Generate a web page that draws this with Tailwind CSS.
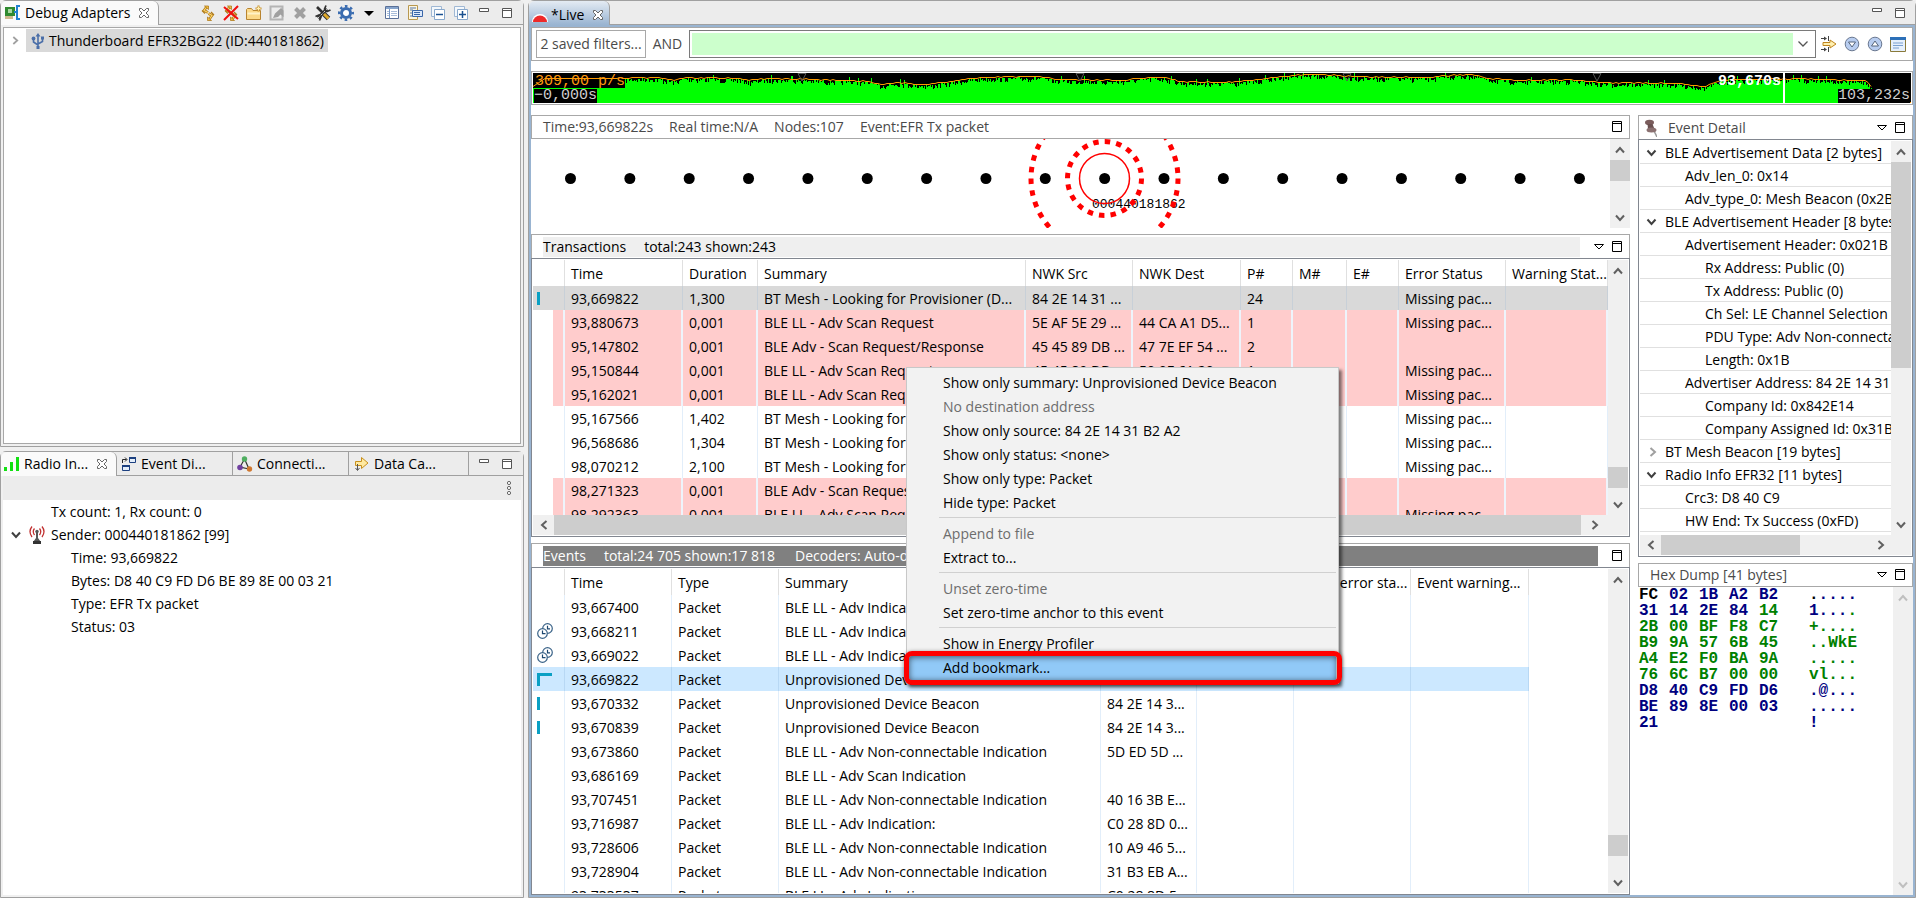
<!DOCTYPE html>
<html lang="en">
<head>
<meta charset="utf-8">
<title>Network Analyzer</title>
<script src="https://cdn.jsdelivr.net/npm/@tailwindcss/browser@4"></script>
</head>
<body class="h-screen overflow-hidden bg-[#f0f0f0] font-['Open_Sans','Noto_Sans',sans-serif] text-[14px] leading-[20px] text-black whitespace-nowrap">

<svg class="hidden">
  <symbol id="up" viewBox="0 0 10 8"><path d="M1 6.500L5 2L9 6.500" fill="none" stroke="currentColor" stroke-width="2"/></symbol>
  <symbol id="down" viewBox="0 0 10 8"><path d="M1 1.500L5 6L9 1.500" fill="none" stroke="currentColor" stroke-width="2"/></symbol>
  <symbol id="left" viewBox="0 0 8 10"><path d="M6.500 1L2 5L6.500 9" fill="none" stroke="currentColor" stroke-width="2"/></symbol>
  <symbol id="right" viewBox="0 0 8 10"><path d="M1.500 1L6 5L1.500 9" fill="none" stroke="currentColor" stroke-width="2"/></symbol>
  <symbol id="min" viewBox="0 0 12 12"><path d="M1.500 1.500h9v3h-9z" fill="#fff" stroke="#555"/></symbol>
  <symbol id="max" viewBox="0 0 12 12"><path d="M1.500 1.500h9v9h-9zM1.500 3.500h9" fill="#fff" stroke="#555"/></symbol>
  <symbol id="maxb" viewBox="0 0 12 12"><path d="M1.500 .500h9v10h-9zM1.500 2.500h9" fill="#fff" stroke="#000"/></symbol>
  <symbol id="tri" viewBox="0 0 12 8"><path d="M1.500 1.500h9L6 6z" fill="#fff" stroke="#000"/></symbol>
  <symbol id="close" viewBox="0 0 12 12"><path d="M1.500 1.500h2L6 4l2.500-2.500h2v2L8 6l2.500 2.500v2h-2L6 8l-2.500 2.500h-2v-2L4 6L1.500 3.500z" fill="#fff" stroke="#666"/></symbol>
  <symbol id="link" viewBox="0 0 16 16">
    <g fill="none" stroke="#b07a18" stroke-width="2.600"><path d="M6.500 2L4 5.500L8 7.500M8.500 8.500L12 10.500L9.500 14"/></g>
    <g fill="none" stroke="#ffd76a" stroke-width="1.100"><path d="M6.500 2L4 5.500L8 7.500M8.500 8.500L12 10.500L9.500 14"/></g>
    <path d="M4.500 1h4v3.500zM11.500 15.500h-4V12z" fill="#f4c040" stroke="#a87010" stroke-width=".7"/>
    <path d="M2 5.500l3 3M14 10l-3-3" stroke="#b07a18" stroke-width="1.200"/>
  </symbol>
  <symbol id="clocks" viewBox="0 0 16 16"><g fill="#fff" stroke="#3a6388" stroke-width="1.200"><circle cx="10.500" cy="5.500" r="4.800"/><circle cx="5.500" cy="10.500" r="4.800"/></g><path d="M5.500 7.500v3.200h3M10.500 2.800v3h2.500" fill="none" stroke="#1c4770" stroke-width="1.200"/></symbol>
</svg>

<div class="flex h-full gap-1">
  <!-- Left views -->
  <div class="flex w-[524px] shrink-0 flex-col gap-1">
    <section class="flex h-[447px] flex-col rounded-t-md border border-[#a0a0a0]">
      <div class="flex h-6 shrink-0 border-b border-[#a0a0a0] bg-[#ececec]">
        <div class="-mb-px flex w-[158px] items-center rounded-t-md border-r border-[#a0a0a0] bg-[#fafafa] pl-1">
          <svg class="size-4" viewBox="0 0 16 16"><path d="M0 2h10v9H0z" fill="#2f8a2f"/><path d="M3 4h4v4H3z" fill="#a8d8a0"/><path d="M1 11v3M3 11v3M5 11v3M7 11v3" stroke="#a07820"/><path d="M15 1h-3v13h3M12 7h-3" fill="none" stroke="#2080d0" stroke-width="2"/></svg>
          <h2 class="ml-1">Debug Adapters</h2>
          <button class="ml-2" aria-label="Close Debug Adapters"><svg class="size-3"><use href="#close"/></svg></button>
        </div>
        <div class="flex flex-1 items-center justify-end gap-[7px] pr-2" role="toolbar">
          <button aria-label="Connect"><svg class="size-4"><use href="#link"/></svg></button>
          <button aria-label="Disconnect"><svg class="size-4" viewBox="0 0 16 16"><use href="#link"/><path d="M1 2L15 14M15 1L1 15" stroke="#f01010" stroke-width="2"/></svg></button>
          <button aria-label="New group"><svg class="size-4" viewBox="0 0 16 16"><path d="M.500 14.500V4.500l1-1h4l1.500 2h7.500v9z" fill="#fbd98a" stroke="#b88430"/><path d="M1.500 8.500h12.500" stroke="#fff2c8" stroke-width="2"/><path d="M12.500 .500v6M9.500 3.500h6" stroke="#c8902a" stroke-width="2"/><path d="M12.500 1.500v4M10.500 3.500h4" stroke="#fff0b0"/></svg></button>
          <button aria-label="Edit" disabled><svg class="size-4" viewBox="0 0 16 16"><path d="M1.500 1.500h12v13h-12z" fill="#ececec" stroke="#b4b4b4" stroke-width="2"/><path d="M4 13l2-4.500L12 3l2.500 2.500V12l-3-2.500L9 12z" fill="#a0a0a0"/></svg></button>
          <button aria-label="Delete" disabled><svg class="size-4" viewBox="0 0 16 16"><path d="M3.500 3.500L12.500 12.500M12.500 3.500L3.500 12.500" stroke="#a0a0a0" stroke-width="4"/></svg></button>
          <button aria-label="Tools"><svg class="size-4" viewBox="0 0 16 16"><path d="M3 13L12 4" stroke="#303030" stroke-width="3.200"/><path d="M3 13L12 4" stroke="#d0d0d0"/><path d="M11 .500L9.500 4l2.500 2.500L15.500 5M.500 11.500L4 10l2 2l-1.500 3.500" fill="none" stroke="#303030" stroke-width="1.700"/><path d="M2 2L8 8" stroke="#303030" stroke-width="2.600"/><path d="M9 9L13.500 13.500" stroke="#303030" stroke-width="5"/><path d="M9 9L13.500 13.500" stroke="#e0a828" stroke-width="3"/></svg></button>
          <button aria-label="Settings"><svg class="size-4" viewBox="0 0 16 16"><circle cx="8" cy="8" r="4.500" fill="#fff" stroke="#3a6cb0" stroke-width="3"/><circle cx="8" cy="8" r="6.800" fill="none" stroke="#3a6cb0" stroke-width="2.400" stroke-dasharray="2.600 2.740" stroke-dashoffset="1.300"/></svg></button>
          <button aria-label="Settings menu"><svg class="h-4 w-4" viewBox="0 0 16 16"><path d="M3 6h10L8 11z"/></svg></button>
          <button aria-label="Table"><svg class="size-4" viewBox="0 0 16 16"><path d="M1.500 1.500h13v12h-13z" fill="#fff" stroke="#5a7098"/><path d="M2 2h12v2H2z" fill="#86a4cc"/><path d="M5.500 4v9" stroke="#7a9ac8"/><path d="M3 6.500h2M7 6.500h6M3 8.500h2M7 8.500h6M3 10.500h2M7 10.500h6" stroke="#a8bcd8"/></svg></button>
          <button aria-label="Copy view"><svg class="size-4" viewBox="0 0 16 16"><path d="M1.500 .500h9v14h-9z" fill="#fdf6e0" stroke="#b89850"/><path d="M3 3h6M3 5h3M3 8h2M3 11h2" stroke="#5577aa"/><path d="M5.500 5.500h10v6h-10z" fill="#dbe8fa" stroke="#3a66a8"/><path d="M7 7.500h6M7 9.500h6" stroke="#3a66a8"/></svg></button>
          <button aria-label="Collapse all"><svg class="size-4" viewBox="0 0 16 16"><path d="M1.500 1.500h10v10h-10z" fill="#f4f8fc" stroke="#a0b8d4"/><path d="M4.500 4.500h10v10h-10z" fill="#fff" stroke="#88a8cc"/><path d="M6 9.500h7" stroke="#1a5090" stroke-width="1.500"/></svg></button>
          <button aria-label="Expand all"><svg class="size-4" viewBox="0 0 16 16"><path d="M1.500 1.500h10v10h-10z" fill="#f4f8fc" stroke="#a0b8d4"/><path d="M4.500 4.500h10v10h-10z" fill="#fff" stroke="#88a8cc"/><path d="M6 9.500h7M9.500 6v7" stroke="#1a5090" stroke-width="1.500"/></svg></button>
          <button class="px-0.5" aria-label="Minimize"><svg class="size-3"><use href="#min"/></svg></button>
          <button class="px-0.5" aria-label="Maximize"><svg class="size-3"><use href="#max"/></svg></button>
        </div>
      </div>
      <div class="flex flex-1 p-0.5">
        <div class="flex-1 border border-[#a8a8a8] bg-white pt-px">
          <div class="flex items-center pl-2" role="treeitem">
            <svg class="h-[9px] w-[7px] text-[#a0a0a0]"><use href="#right"/></svg>
            <span class="ml-[7px] flex h-[23px] items-center bg-[#d9d9d9] pr-1 pl-1">
              <svg class="size-4" viewBox="0 0 16 16"><g fill="none" stroke="#4a6ea8" stroke-width="1.600"><path d="M8 2v12M3.500 6v3L8 12M12.500 5v3.500L8 11"/></g><path d="M8 0l2.500 3.500h-5zM6.500 13h3v3h-3zM11 3.500h3v3h-3z" fill="#4a6ea8"/><circle cx="3.500" cy="5.500" r="1.900" fill="#4a6ea8"/></svg>
              <span class="ml-[3px]">Thunderboard EFR32BG22 (ID:440181862)</span>
            </span>
          </div>
        </div>
      </div>
    </section>

    <section class="flex flex-1 flex-col rounded-t-md border border-[#a0a0a0]">
      <div class="flex h-6 shrink-0 border-b border-[#a0a0a0] bg-[#ececec]" role="tablist">
        <div class="-mb-px flex w-[116px] items-center rounded-t-md border-r border-[#a0a0a0] bg-[#fafafa] pl-[3px]">
          <svg class="size-4" viewBox="0 0 16 16"><path d="M0 11h3v4H0zM6 6h3v9H6zM12 1h3v14h-3z" fill="#12e012"/></svg>
          <button class="ml-1" role="tab">Radio In...</button>
          <button class="ml-2" aria-label="Close Radio Info"><svg class="size-3"><use href="#close"/></svg></button>
        </div>
        <button class="flex w-[116px] items-center gap-1 border-r border-[#a0a0a0] pl-1" role="tab">
          <svg class="size-4" viewBox="0 0 16 16"><g fill="#e4eefa" stroke="#1c4080"><path d="M8.500 1.500h6v5h-6zM1.500 9.500h7v5h-7z"/></g><path d="M8 2h7M1 10h8" stroke="#1c4080" stroke-width="2"/><path d="M1.500 7V3.500h4M4 1.500l2 2l-2 2" fill="none" stroke="#222"/></svg>Event Di...</button>
        <button class="flex w-[116px] items-center gap-1 border-r border-[#a0a0a0] pl-1" role="tab">
          <svg class="size-4" viewBox="0 0 16 16"><path d="M7 4L3 11L12 13L8 4" fill="none" stroke="#333" stroke-width="1.200"/><circle cx="7.500" cy="3" r="2.700" fill="#4fae60"/><circle cx="3" cy="11.500" r="2.800" fill="#7040a0"/><circle cx="12.500" cy="13" r="2.700" fill="#d07830"/></svg>Connecti...</button>
        <button class="flex w-[120px] items-center gap-1 border-r border-[#a0a0a0] pl-[5px]" role="tab">
          <svg class="size-4" viewBox="0 0 16 16"><path d="M1.500 5.500h6v-4L14 7l-6.500 5.500v-3h-6z" fill="#ffe9a0" stroke="#c8901c"/><path d="M3.500 8v6M1.500 12l2 2.500l2-2.500" fill="none" stroke="#555"/></svg>Data Ca...</button>
        <div class="flex flex-1 items-center justify-end gap-[7px] pr-2">
          <button class="px-0.5" aria-label="Minimize"><svg class="size-3"><use href="#min"/></svg></button>
          <button class="px-0.5" aria-label="Maximize"><svg class="size-3"><use href="#max"/></svg></button>
        </div>
      </div>
      <div class="flex flex-1 flex-col px-0.5 pb-0.5">
        <div class="flex h-6 items-center justify-end bg-[#ececec] pr-2"><button aria-label="View menu"><svg class="h-4 w-2" viewBox="0 0 8 16"><g fill="#fff" stroke="#666"><circle cx="4" cy="3" r="1.600"/><circle cx="4" cy="8" r="1.600"/><circle cx="4" cy="13" r="1.600"/></g></svg></button></div>
        <ul class="flex-1 bg-white leading-[23px]">
          <li class="pl-12">Tx count: 1, Rx count: 0</li>
          <li>
            <div class="flex items-center pl-2"><svg class="h-2 w-2.5 text-[#404040]"><use href="#down"/></svg>
              <svg class="mr-1.5 ml-2 h-5 w-4" viewBox="0 0 16 20"><g fill="none" stroke="#c03030" stroke-width="1.300"><path d="M3 1.500Q-1 6.500 3 12M13 1.500Q17 6.500 13 12M5.500 3.500Q3 6.500 5.500 10M10.500 3.500Q13 6.500 10.500 10"/></g><circle cx="8" cy="6.500" r="1.700" fill="#555"/><path d="M7 7h2v6l2.500 3.500h-7L7 13z" fill="#555"/><path d="M4 16h8v3H4z" fill="#333"/></svg>
              Sender: 000440181862 [99]</div>
            <ul class="pl-[68px]">
              <li>Time: 93,669822</li>
              <li>Bytes: D8 40 C9 FD D6 BE 89 8E 00 03 21</li>
              <li>Type: EFR Tx packet</li>
              <li>Status: 03</li>
            </ul>
          </li>
        </ul>
      </div>
    </section>
  </div>

  <!-- Live editor -->
  <main class="flex min-w-0 flex-1 flex-col rounded-t-md border border-[#a0a0a0]">
    <div class="flex h-6 shrink-0 border-b border-[#a0a0a0] bg-[#ececec]">
      <div class="-mb-px flex w-[81px] items-center rounded-t-md border-r border-[#a0a0a0] bg-linear-to-b from-[#e4ebf3] to-[#99b4d1] pt-1 pl-[3px]">
        <svg class="size-4" viewBox="0 0 16 16"><path d="M0 15a8 8 0 0 1 16 0z" fill="#fff"/><path d="M1 15a7 6.500 0 0 1 14 0z" fill="#ee2a2a"/></svg>
        <h1 class="ml-[3px]">*Live</h1>
        <button class="ml-2" aria-label="Close Live"><svg class="size-3"><use href="#close"/></svg></button>
      </div>
      <div class="flex flex-1 items-center justify-end gap-[11px] pr-[9px]">
        <button aria-label="Minimize"><svg class="size-3"><use href="#min"/></svg></button>
        <button aria-label="Maximize"><svg class="size-3"><use href="#max"/></svg></button>
      </div>
    </div>
    <div class="flex min-h-0 flex-1 border-2 border-[#99b4d1] bg-white">
     <div class="flex min-h-0 min-w-0 flex-1 flex-col">
      <div class="flex h-[34px] shrink-0 items-center border border-[#a8a8a8] pr-1.5 pl-1">
        <button class="flex h-7 w-[110px] items-center justify-center border border-[#a8a8a8] text-[#4a4a4a]">2 saved filters...</button>
        <label for="filter" class="w-[43px] text-center text-[#4a4a4a]">AND</label>
        <div class="flex h-7 flex-1 items-center border border-[#7a7a7a] p-0.5">
          <input id="filter" type="text" class="h-full min-w-0 flex-1 bg-[#ccffcc] outline-none">
          <button class="flex w-5 justify-center text-[#555]" aria-label="Filter history"><svg class="h-2 w-2.5" viewBox="0 0 10 8"><path d="M.500 1.500L5 6L9.500 1.500" fill="none" stroke="currentColor" stroke-width="1.300"/></svg></button>
        </div>
        <div class="ml-[5px] flex items-center gap-[7px]">
          <button aria-label="Apply filter"><svg class="size-4" viewBox="0 0 16 16"><path d="M0 2.500h5M0 13.500h5M7.500 0v5M7.500 11v5" stroke="#444"/><path d="M3 .500l3 2l-3 2zM3 11.500l3 2l-3 2z" fill="#444"/><path d="M2 6.500h7v-2.500L15 8l-6 4V9.500H2z" fill="#fff0b0" stroke="#c0841c"/></svg></button>
          <button aria-label="Next match"><svg class="size-4" viewBox="0 0 16 16"><circle cx="8" cy="8" r="6.800" fill="#b8cdf0" stroke="#6a7890"/><path d="M4.500 6h7L8 11z" fill="#fff" stroke="#55657d"/></svg></button>
          <button aria-label="Previous match"><svg class="size-4" viewBox="0 0 16 16"><circle cx="8" cy="8" r="6.800" fill="#b8cdf0" stroke="#6a7890"/><path d="M4.500 10h7L8 5z" fill="#fff" stroke="#55657d"/></svg></button>
          <button aria-label="Open filter editor"><svg class="size-4" viewBox="0 0 16 16"><path d="M.500 1.500h15v14H.500z" fill="#e6f0fc" stroke="#8a7a3a"/><path d="M0 1h16v3H0z" fill="#2c70b8"/><path d="M3 7h10M3 9.500h10M3 12h6" stroke="#7aa0d0"/></svg></button>
        </div>
      </div>

      <div class="mt-2.5 h-[34px] shrink-0 border border-[#a8a8a8] p-px font-['Liberation_Mono',monospace] text-[15px] leading-[14px]">
        <div class="relative h-[30px] bg-black">
          <svg id="timeline" class="absolute inset-0 h-full w-full" viewBox="533 73 1378 30" preserveAspectRatio="none"></svg>
          <span class="absolute top-0.5 left-0.5 text-[#ff9a10]">309,00 p/s</span>
          <span class="absolute bottom-0 left-px bg-black text-[#d0d0d0]">−0,000s</span>
          <span class="absolute top-0.5 right-[130px] font-bold text-white">93,670s</span>
          <span class="absolute right-[126px] h-full w-0.5 bg-white"></span>
          <span class="absolute right-px bottom-0 bg-black text-[#d0d0d0]">103,232s</span>
        </div>
      </div>

      <div class="mt-2.5 flex min-h-0 flex-1 gap-2">
        <div class="flex min-w-0 flex-1 flex-col">
          <div class="flex h-6 shrink-0 items-center border border-[#a8a8a8] pr-[6px] pl-[11px] text-[#4a4a4a]">
            <span>Time:93,669822s</span><span class="ml-4">Real time:N/A</span><span class="ml-4">Nodes:107</span><span class="ml-4 flex-1">Event:EFR Tx packet</span>
            <button aria-label="Maximize map"><svg class="size-3"><use href="#maxb"/></svg></button>
          </div>
          <div class="flex h-[89px] shrink-0">
            <svg id="nodes" class="h-full min-w-0 flex-1" viewBox="531 139 1079 89" preserveAspectRatio="xMinYMin slice"></svg>
            <div class="flex w-5 flex-col items-center bg-[#f0f0f0] text-[#606060]">
              <button class="flex h-[21px] items-center" aria-label="Scroll up"><svg class="h-2 w-2.5"><use href="#up"/></svg></button>
              <div class="h-[21px] w-full bg-[#cdcdcd]"></div>
              <button class="mt-auto flex h-[21px] items-center" aria-label="Scroll down"><svg class="h-2 w-2.5"><use href="#down"/></svg></button>
            </div>
          </div>

          <div class="mt-1.5 flex h-6 shrink-0 items-center border-x border-t border-[#a8a8a8] py-px pr-[6px] pl-[11px]">
            <div class="flex h-5 flex-1 items-center bg-[#efefef]"><h2>Transactions</h2><span class="ml-[18px]">total:243 shown:243</span></div>
            <button class="ml-[13px]" aria-label="Transactions menu"><svg class="h-2 w-3"><use href="#tri"/></svg></button>
            <button class="ml-1.5" aria-label="Maximize transactions"><svg class="size-3"><use href="#maxb"/></svg></button>
          </div>
          <div class="flex h-[279px] shrink-0 flex-col border border-[#828790] p-px">
            <div class="flex min-h-0 flex-1">
              <div class="min-w-0 flex-1 overflow-hidden">
                <table class="w-full table-fixed border-separate border-spacing-0 text-left">
                  <colgroup><col class="w-[32px]"><col class="w-[118px]"><col class="w-[75px]"><col class="w-[268px]"><col class="w-[107px]"><col class="w-[108px]"><col class="w-[52px]"><col class="w-[54px]"><col class="w-[52px]"><col class="w-[107px]"><col></colgroup>
                  <thead id="txhead"></thead><tbody id="tx"></tbody>
                </table>
              </div>
              <div class="flex w-5 flex-col items-center bg-[#f0f0f0] text-[#606060]">
                <button class="flex h-[21px] items-center" aria-label="Scroll up"><svg class="h-2 w-2.5"><use href="#up"/></svg></button>
                <div class="flex-1"></div>
                <div class="h-[21px] w-full bg-[#cdcdcd]"></div>
                <div class="h-1.5"></div>
                <button class="flex h-[21px] items-center" aria-label="Scroll down"><svg class="h-2 w-2.5"><use href="#down"/></svg></button>
              </div>
            </div>
            <div class="flex h-5 shrink-0 items-center bg-[#f0f0f0] pr-5 text-[#606060]">
              <button class="flex w-[21px] justify-center" aria-label="Scroll left"><svg class="h-2.5 w-2"><use href="#left"/></svg></button>
              <div class="h-full flex-1 bg-[#cdcdcd]"></div>
              <button class="flex w-[27px] justify-center" aria-label="Scroll right"><svg class="h-2.5 w-2"><use href="#right"/></svg></button>
            </div>
          </div>

          <div class="mt-1.5 flex h-6 shrink-0 items-center border-x border-t border-[#a8a8a8] py-px pr-[6px] pl-[11px]">
            <div class="flex h-5 flex-1 items-center bg-[#808080] text-white"><h2>Events</h2><span class="ml-[18px]">total:24 705 shown:17 818</span><span class="ml-5">Decoders: Auto-detecting decoder stack</span></div>
            <button class="ml-[13px]" aria-label="Maximize events"><svg class="size-3"><use href="#maxb"/></svg></button>
          </div>
          <div class="flex min-h-0 flex-1 border border-[#828790] p-px">
            <div class="min-w-0 flex-1 overflow-hidden">
              <table class="w-[996px] table-fixed border-separate border-spacing-0 text-left">
                <colgroup><col class="w-[32px]"><col class="w-[107px]"><col class="w-[107px]"><col class="w-[322px]"><col class="w-[96px]"><col class="w-[97px]"><col class="w-[117px]"><col class="w-[118px]"></colgroup>
                <thead id="evhead"></thead><tbody id="ev"></tbody>
              </table>
            </div>
            <div class="flex w-5 flex-col items-center bg-[#f0f0f0] text-[#606060]">
              <button class="flex h-[21px] items-center" aria-label="Scroll up"><svg class="h-2 w-2.5"><use href="#up"/></svg></button>
              <div class="flex-1"></div>
              <div class="h-[21px] w-full bg-[#cdcdcd]"></div>
              <div class="h-4"></div>
              <button class="flex h-[21px] items-center" aria-label="Scroll down"><svg class="h-2 w-2.5"><use href="#down"/></svg></button>
            </div>
          </div>
        </div>

        <aside class="flex w-[275px] shrink-0 flex-col">
          <div class="flex h-6 shrink-0 items-center border-x border-t border-[#a8a8a8] pr-[6px] pl-1.5 text-[#4a4a4a]">
            <svg class="h-[18px] w-3" viewBox="0 0 12 18"><path d="M9 12L12 18" stroke="#999" stroke-width="1.500"/><ellipse cx="4.500" cy="3.500" rx="4.500" ry="2.800" fill="#7a5c5c"/><path d="M2.500 5h5l2 5H3z" fill="#6a5050"/><ellipse cx="6.500" cy="11" rx="5" ry="2.500" fill="#8a7070"/></svg>
            <h2 class="ml-[11px] flex-1">Event Detail</h2>
            <button aria-label="Event Detail menu"><svg class="h-2 w-3"><use href="#tri"/></svg></button>
            <button class="ml-1.5" aria-label="Maximize event detail"><svg class="size-3"><use href="#maxb"/></svg></button>
          </div>
          <div class="flex h-[418px] shrink-0 flex-col border border-[#828790] p-px">
            <div class="flex min-h-0 flex-1">
              <ul id="detail" class="min-w-0 flex-1 overflow-hidden"></ul>
              <div class="flex w-5 flex-col items-center bg-[#f0f0f0] text-[#606060]">
                <button class="flex h-[21px] items-center" aria-label="Scroll up"><svg class="h-2 w-2.5"><use href="#up"/></svg></button>
                <div class="h-[206px] w-full bg-[#cdcdcd]"></div>
                <button class="mt-auto flex h-[21px] items-center" aria-label="Scroll down"><svg class="h-2 w-2.5"><use href="#down"/></svg></button>
              </div>
            </div>
            <div class="flex h-5 shrink-0 items-center bg-[#f0f0f0] pr-5 text-[#606060]">
              <button class="flex w-[21px] justify-center" aria-label="Scroll left"><svg class="h-2.5 w-2"><use href="#left"/></svg></button>
              <div class="h-full w-[139px] bg-[#cdcdcd]"></div>
              <button class="ml-auto flex w-[21px] justify-center" aria-label="Scroll right"><svg class="h-2.5 w-2"><use href="#right"/></svg></button>
            </div>
          </div>
          <div class="mt-1.5 flex h-6 shrink-0 items-center border border-[#a8a8a8] pr-[6px] pl-[11px] text-[#4a4a4a]">
            <h2 class="flex-1">Hex Dump [41 bytes]</h2>
            <button aria-label="Hex Dump menu"><svg class="h-2 w-3"><use href="#tri"/></svg></button>
            <button class="ml-1.5" aria-label="Maximize hex dump"><svg class="size-3"><use href="#maxb"/></svg></button>
          </div>
          <div class="flex min-h-0 flex-1">
            <div id="hex" class="flex-1 pl-px font-['Liberation_Mono',monospace] text-[16px] leading-[16px] font-bold text-[#000080]"></div>
            <div class="flex w-5 flex-col items-center justify-between bg-[#f0f0f0] text-[#bfbfbf]">
              <button class="flex h-[21px] items-center" aria-label="Scroll up"><svg class="h-2 w-2.5"><use href="#up"/></svg></button>
              <button class="flex h-[21px] items-center" aria-label="Scroll down"><svg class="h-2 w-2.5"><use href="#down"/></svg></button>
            </div>
          </div>
        </aside>
      </div>
     </div>
    </div>
  </main>
</div>

<!-- Context menu -->
<div class="absolute top-[367px] left-[906px] w-[433px] border border-[#c8c8c8] bg-[#f2f2f2] py-[3px] pr-0.5 shadow-[3px_3px_3px_rgba(0,0,0,0.5)]" role="menu" id="menu"></div>
<div class="pointer-events-none absolute top-[651px] left-[904px] h-[34px] w-[438px] rounded-lg border-[5px] border-[#ff0000] shadow-[0_1px_4px_rgba(0,0,0,0.5),inset_0_1px_6px_rgba(0,0,0,0.6)]"></div>

<script>
const $ = id => document.getElementById(id);

/* Table headers */
const th = t => `<th class="h-[26px] overflow-hidden border-r border-[#e0e0e0] p-0 pt-0.5 pl-1.5 font-normal">${t}</th>`;
$('txhead').innerHTML = '<tr>' + ['', 'Time', 'Duration', 'Summary', 'NWK Src', 'NWK Dest', 'P#', 'M#', 'E#', 'Error Status', 'Warning Stat...'].map(th).join('') + '</tr>';
$('evhead').innerHTML = '<tr>' + ['', 'Time', 'Type', 'Summary', 'NWK Src', 'NWK Dest', 'Event error sta...', 'Event warning...'].map(th).join('') + '</tr>';

/* Transactions: style, time, duration, summary, source, destination, packets, status */
const M = 'Missing pac...', PR = 'BT Mesh - Looking for Provisioner (D...';
const tx = [
  ['sel', '93,669822', '1,300', PR, '84 2E 14 31 ...', '', '24', M],
  ['pink', '93,880673', '0,001', 'BLE LL - Adv Scan Request', '5E AF 5E 29 ...', '44 CA A1 D5...', '1', M],
  ['pink', '95,147802', '0,001', 'BLE Adv - Scan Request/Response', '45 45 89 DB ...', '47 7E EF 54 ...', '2', ''],
  ['pink', '95,150844', '0,001', 'BLE LL - Adv Scan Request', '45 45 89 DB ...', '50 0E 61 20 ...', '1', M],
  ['pink', '95,162021', '0,001', 'BLE LL - Adv Scan Request', '', '', '', M],
  ['', '95,167566', '1,402', PR, '', '', '', M],
  ['', '96,568686', '1,304', PR, '', '', '', M],
  ['', '98,070212', '2,100', PR, '', '', '', M],
  ['pink', '98,271323', '0,001', 'BLE Adv - Scan Request/Response', '', '', '', ''],
  ['pink', '98,292363', '0,001', 'BLE LL - Adv Scan Request', '', '', '', M]
];
const cellStyle = {
  sel: 'border-r border-[#c8d0d8] bg-[#d9d9d9]',
  pink: 'border-r-2 border-[#eef4fb] bg-[#ffcccc]',
  '': 'border-r border-[#e2eefa]'
};
const mark = '<span class="ml-1 block h-[13px] w-[3px] bg-[#0aa0c4]"></span>';
const firstTx = {
  sel: `<td class="h-6 border-r border-[#c8d0d8] bg-[#d9d9d9] p-0">${mark}</td>`,
  pink: '<td class="h-6 border-r-2 border-[#eef4fb] p-0 pl-5"><span class="block h-6 bg-[#ffcccc]"></span></td>',
  '': '<td class="h-6 border-r border-[#e2eefa] p-0"></td>'
};
$('tx').innerHTML = tx.map(([s, t, d, sum, src, dst, p, st]) =>
  `<tr>${firstTx[s]}` + [t, d, sum, src, dst, p, '', '', st, ''].map(c => `<td class="h-6 overflow-hidden p-0 pt-0.5 pl-1.5 ${cellStyle[s]}">${c}</td>`).join('') + '</tr>').join('');

/* Events: icon, time, summary, source */
const N = 'BLE LL - Adv Non-connectable Indication', U = 'Unprovisioned Device Beacon';
const ev = [
  ['', '93,667400', 'BLE LL - Adv Indication:', ''],
  ['clk', '93,668211', 'BLE LL - Adv Indication:', ''],
  ['clk', '93,669022', 'BLE LL - Adv Indication:', ''],
  ['top', '93,669822', U, ''],
  ['bar', '93,670332', U, '84 2E 14 3...'],
  ['bar', '93,670839', U, '84 2E 14 3...'],
  ['', '93,673860', N, '5D ED 5D ...'],
  ['', '93,686169', 'BLE LL - Adv Scan Indication', ''],
  ['', '93,707451', N, '40 16 3B E...'],
  ['', '93,716987', 'BLE LL - Adv Indication:', 'C0 28 8D 0...'],
  ['', '93,728606', N, '10 A9 46 5...'],
  ['', '93,728904', N, '31 B3 EB A...'],
  ['', '93,733537', 'BLE LL - Adv Indication:', 'C0 28 8D 5...']
];
const evIcon = {
  '': '', bar: mark,
  clk: '<svg class="ml-1 size-4"><use href="#clocks"/></svg>',
  top: '<span class="ml-1 block h-[13px] w-[15px] border-t-[3px] border-l-[3px] border-[#0aa0c4]"></span>'
};
$('ev').innerHTML = ev.map(([i, t, sum, src]) => {
  const c = i === 'top' ? 'border-r border-[#b8d8f4] bg-[#cce8ff]' : 'border-r border-[#e2eefa]';
  return `<tr><td class="h-6 p-0 ${c}">${evIcon[i]}</td>` + [t, 'Packet', sum, src, '', '', ''].map(x => `<td class="h-6 overflow-hidden p-0 pt-0.5 pl-1.5 ${c}">${x}</td>`).join('') + '</tr>';
}).join('');

/* Event detail tree: level, text, arrow */
const pad = ['pl-[6px]', 'pl-[45px]', 'pl-[65px]'];
$('detail').innerHTML = [
  [0, 'BLE Advertisement Data [2 bytes]', 'down'], [1, 'Adv_len_0: 0x14'], [1, 'Adv_type_0: Mesh Beacon (0x2B)'],
  [0, 'BLE Advertisement Header [8 bytes]', 'down'], [1, 'Advertisement Header: 0x021B'],
  [2, 'Rx Address: Public (0)'], [2, 'Tx Address: Public (0)'], [2, 'Ch Sel: LE Channel Selection'], [2, 'PDU Type: Adv Non-connectable'], [2, 'Length: 0x1B'],
  [1, 'Advertiser Address: 84 2E 14 31 B2 A2'], [2, 'Company Id: 0x842E14'], [2, 'Company Assigned Id: 0x31B2A2'],
  [0, 'BT Mesh Beacon [19 bytes]', 'right'], [0, 'Radio Info EFR32 [11 bytes]', 'down'], [1, 'Crc3: D8 40 C9'], [1, 'HW End: Tx Success (0xFD)']
].map(([l, t, a]) => `<li class="flex h-[23px] items-center overflow-hidden border-b border-[#e0e0e0] pt-0.5 ${pad[l]}">` +
  (a === 'down' ? '<svg class="mr-2 h-2 w-[11px] shrink-0 text-[#404040]"><use href="#down"/></svg>' : '') +
  (a === 'right' ? '<svg class="mr-2 ml-[3px] h-2.5 w-2 shrink-0 text-[#a0a0a0]"><use href="#right"/></svg>' : '') + `<span>${t}</span></li>`).join('');

/* Hex dump: bytes 9 to 29 belong to the payload */
const ascii = ['.....', '1....', '+....', '..WkE', '.....', 'vl...', '.@...', '.....', '!'];
const bytes = 'FC 02 1B A2 B2 31 14 2E 84 14 2B 00 BF F8 C7 B9 9A 57 6B 45 A4 E2 F0 BA 9A 76 6C B7 00 00 D8 40 C9 FD D6 BE 89 8E 00 03 21'.split(' ');
const tone = i => i === 0 ? 'text-black' : i > 8 && i < 30 ? 'text-[#008000]' : 'text-[#000080]';
$('hex').innerHTML = ascii.map((a, r) => '<div class="grid grid-cols-[30px_30px_30px_30px_50px_1fr]">' +
  [0, 1, 2, 3, 4].map(c => `<span class="${tone(r * 5 + c)}">${bytes[r * 5 + c] || ''}</span>`).join('') +
  '<span>' + [...a].map((ch, c) => `<span class="${tone(r * 5 + c)}">${ch}</span>`).join('') + '</span></div>').join('');

/* Context menu */
$('menu').innerHTML = ['Show only summary: Unprovisioned Device Beacon', '!No destination address', 'Show only source: 84 2E 14 31 B2 A2', 'Show only status: &lt;none&gt;', 'Show only type: Packet', 'Hide type: Packet', '-', '!Append to file', 'Extract to...', '-', '!Unset zero-time', 'Set zero-time anchor to this event', '-', 'Show in Energy Profiler', '*Add bookmark...'].map(t =>
  t === '-' ? '<div class="flex h-[7px] pt-0.5 pl-8"><hr class="flex-1 border-[#d0d0d0]"></div>' :
  t[0] === '!' ? `<button class="block h-6 w-full pl-9 text-left text-[#6d6d6d]" role="menuitem" disabled>${t.slice(1)}</button>` :
  t[0] === '*' ? `<button class="block h-6 w-full bg-[#91c9f7] pl-9 text-left" role="menuitem">${t.slice(1)}</button>` :
  `<button class="block h-6 w-full pl-9 text-left" role="menuitem">${t}</button>`).join('');

/* Traffic timeline */
const avg = [[533,86],[545,78],[600,78],[655,77],[675,80],[685,77],[740,78],[750,80],[765,78],[815,79],[870,81],[880,84],[895,82],[930,84],[950,81],[980,77],[1040,76],[1055,79],[1120,80],[1150,77],[1165,77],[1180,81],[1200,82],[1240,81],[1260,79],[1290,75],[1320,74],[1350,76],[1425,77],[1450,75],[1470,74],[1490,78],[1520,80],[1570,79],[1600,82],[1680,83],[1705,86],[1720,80],[1740,79],[1800,78],[1850,80],[1866,80],[1872,88]];
let seed = 7;
const rnd = () => (seed = seed * 16807 % 2147483647) / 2147483647;
const at = x => { const i = avg.findIndex(p => p[0] > x), a = avg[i - 1], b = avg[i]; return a[1] + (b[1] - a[1]) * (x - a[0]) / (b[0] - a[0]); };
let green = 'M533 103V88H625', line = '';
for (let x = 625; x < 1872; x++) {
  const k = rnd();
  green += `V${Math.round(at(x) + (k > .97 ? -3 : 1 + k * k * 5))}h1`;
}
for (let x = 533; x < 1872; x += 3) line += `${x},${Math.round(at(x) + rnd() - .5) + .5} `;
$('timeline').innerHTML = `<path d="${green}V103z" fill="#00ff00" shape-rendering="crispEdges"/><polyline points="${line}" fill="none" stroke="#ff9a00"/><path d="M1880 102.500h31" stroke="#ff9a00"/>` +
  [802, 1080, 1347, 1597].map(x => `<path d="M${x - 4} 73.500h8L${x} 81z" fill="none" stroke="#555"/>`).join('');

/* Node map */
let dots = '';
for (let i = 0; i < 18; i++) dots += `<circle cx="${570.5 + i * 59.35}" cy="178.500" r="5.500"/>`;
$('nodes').innerHTML = dots + '<text x="1092" y="208" font-size="13" font-family="Liberation Mono, monospace">000440181862</text><g fill="none" stroke="#f00" stroke-width="5"><circle cx="1104.500" cy="178.500" r="25" stroke-width="1.500"/><circle cx="1104.500" cy="178.500" r="37" stroke-dasharray="5.500 6.120"/><circle cx="1104.500" cy="178.500" r="73.500" stroke-dasharray="5.500 6.340"/></g>';
</script>
</body>
</html>
